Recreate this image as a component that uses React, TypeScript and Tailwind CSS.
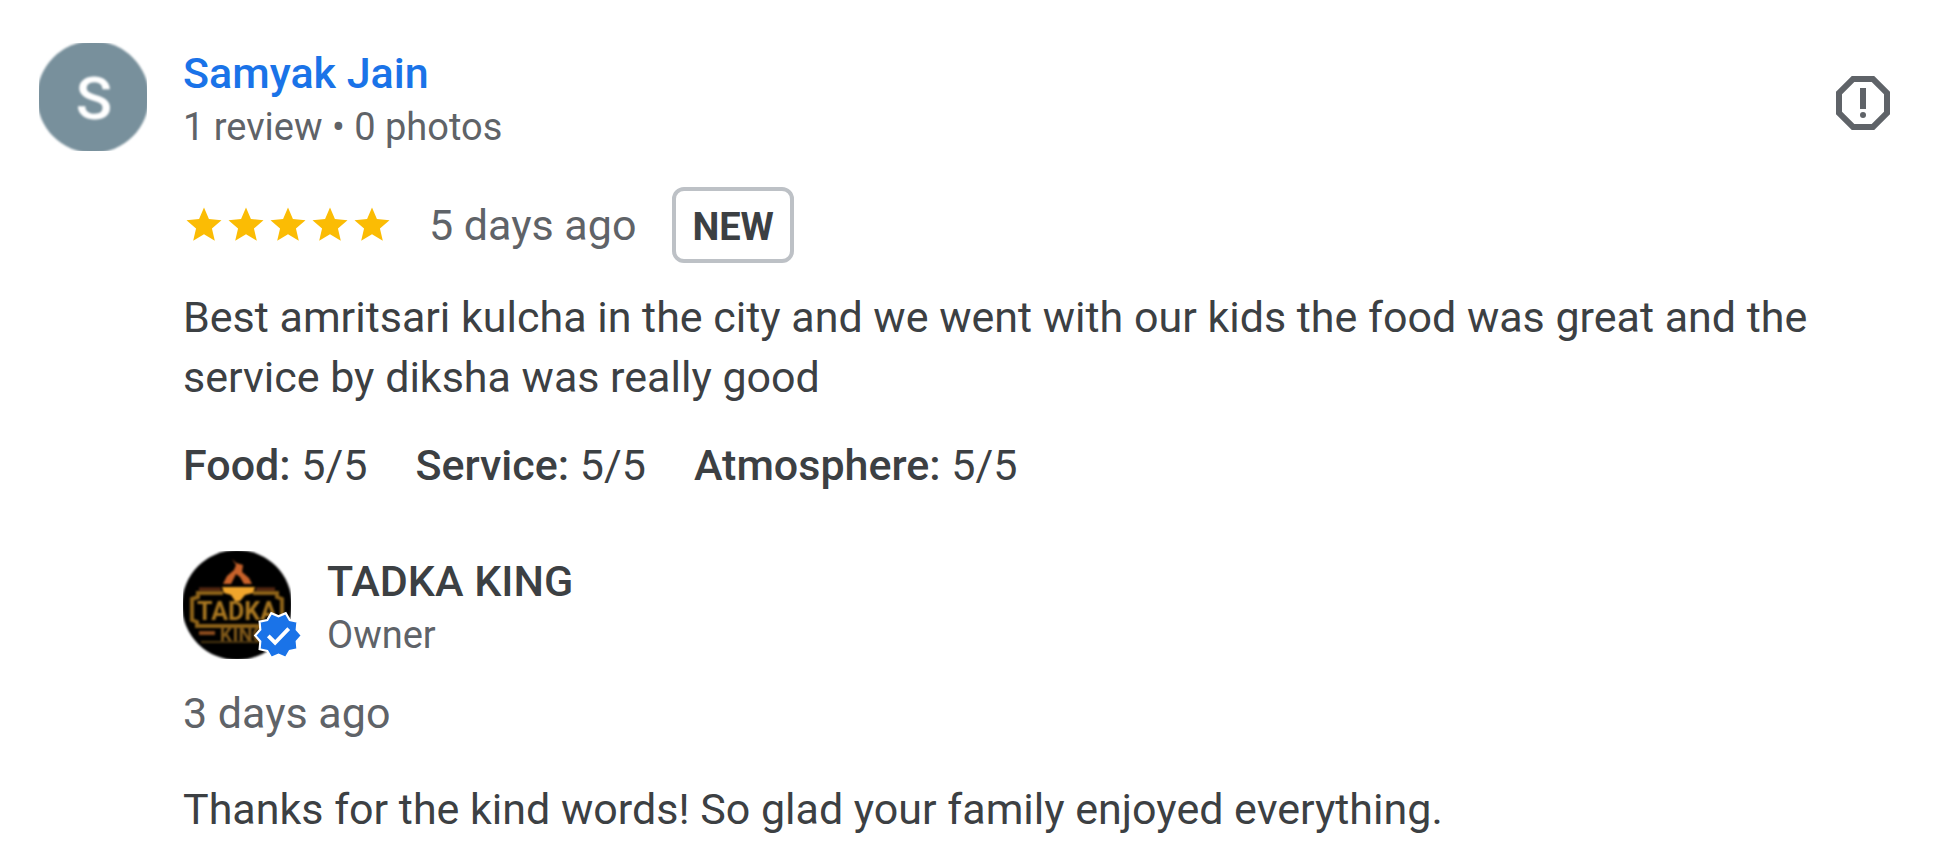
interface Rating {
  label: string;
  score: number;
}

const ratings: Rating[] = [
  { label: "Food", score: 5 },
  { label: "Service", score: 5 },
  { label: "Atmosphere", score: 5 },
];

function Star() {
  return (
    <svg viewBox="0 0 24 24" className="w-[42px] h-[42px]" fill="#fbbc04" aria-hidden="true">
      <path d="M12 17.27L18.18 21l-1.64-7.03L22 9.24l-7.19-.61L12 2 9.19 8.63 2 9.24l5.46 4.73L5.82 21z" />
    </svg>
  );
}

function ReportIcon() {
  return (
    <svg viewBox="0 0 24 24" className="w-18 h-18" fill="currentColor" aria-hidden="true">
      <path d="M15.73 3H8.27L3 8.27v7.46L8.27 21h7.46L21 15.73V8.27L15.73 3zM19 14.9L14.9 19H9.1L5 14.9V9.1L9.1 5h5.8L19 9.1v5.8z" />
      <circle cx="12" cy="16" r="1" />
      <path d="M11 7h2v7h-2z" />
    </svg>
  );
}

function ReviewerAvatar() {
  return (
    <svg viewBox="0 0 108 108" className="w-27 h-27 shrink-0" aria-hidden="true">
      <g className="blur-[1px]">
        <circle cx="54" cy="54" r="56" fill="#78909c" />
        <text
          x="55"
          y="76"
          textAnchor="middle"
          fill="#ffffff"
          className="font-[Roboto,sans-serif] text-[60px] font-medium"
        >
          S
        </text>
      </g>
    </svg>
  );
}

function OwnerLogo() {
  return (
    <svg viewBox="0 0 108 108" className="w-27 h-27" aria-hidden="true">
      <g className="blur-[1px]">
        <circle cx="54" cy="54" r="55" fill="#000000" />
        {/* flame */}
        <path
          d="M49 8L53 12L60 14L59 21L66 27L69 33H61L57 26L53 23L48 33H40L44 25L51 19L53 14Z"
          fill="#c9622a"
        />
        {/* bowl */}
        <path d="M39 36H72L70 42L62 44L57 50H52L48 44L41 42Z" fill="#f0a52c" />
        {/* sign frame */}
        <path d="M16 38H38M73 38H92" stroke="#5c2a12" strokeWidth="3" />
        <path
          d="M40 42H15V46L9 48V69L14 71V75H94V71L99 69V48L94 46V42H70"
          fill="none"
          stroke="#8c6118"
          strokeWidth="4"
        />
        <text
          x="54"
          y="69"
          textAnchor="middle"
          fill="#a87620"
          className="font-[Roboto,sans-serif] text-[25px] font-bold"
        >
          TADKA
        </text>
        <path d="M16 82H32" stroke="#8a4a1c" strokeWidth="4" />
        <text
          x="60"
          y="91"
          textAnchor="middle"
          fill="#80591a"
          className="font-[Roboto,sans-serif] text-[20px] font-bold"
        >
          KING
        </text>
        <path d="M18 91H88" stroke="#4a3510" strokeWidth="2" />
      </g>
    </svg>
  );
}

function VerifiedBadge() {
  return (
    <svg viewBox="0 0 24 24" className="absolute left-[70px] top-[59px] w-[51px] h-[51px]" aria-hidden="true">
      <path
        d="M23 12l-2.44-2.79.34-3.69-3.61-.82-1.89-3.2L12 2.96 8.6 1.5 6.71 4.69 3.1 5.5l.34 3.7L1 12l2.44 2.79-.34 3.7 3.61.82L8.6 22.5l3.4-1.47 3.4 1.46 1.89-3.19 3.61-.82-.34-3.69L23 12z"
        fill="#1a73e8"
        stroke="#ffffff"
        strokeWidth="1"
      />
      <path d="M7.2 12.2l3.2 3.2 6.4-6.6" fill="none" stroke="#ffffff" strokeWidth="1.8" />
    </svg>
  );
}

export default function App() {
  return (
    <article className="bg-white pl-[39px] pr-[34px] pt-[43px] pb-[26px] font-[Roboto,sans-serif] text-[43px] leading-[60px] text-[#3c4043]">
      <header className="flex items-center gap-9">
        <ReviewerAvatar />
        <div className="flex-1">
          <a href="#reviewer" className="block font-medium text-[#1a73e8]">
            Samyak Jain
          </a>
          <p className="text-[38px] leading-[48px] text-[#5f6368]">1 review • 0 photos</p>
        </div>
        <button type="button" aria-label="Report review" className="pt-3 text-[#5f6368]">
          <ReportIcon />
        </button>
      </header>

      <div className="pl-36 pt-9">
        <div className="flex items-center gap-9">
          <div className="flex" role="img" aria-label="5 stars">
            {[1, 2, 3, 4, 5].map((n) => (
              <Star key={n} />
            ))}
          </div>
          <span className="text-[#5f6368]">5 days ago</span>
          <span className="rounded-xl border-4 border-[#bdc1c6] px-4 pt-1.5 pb-0.5 text-[38px] font-bold">
            NEW
          </span>
        </div>

        <p className="mt-6 pr-12">
          Best amritsari kulcha in the city and we went with our kids the food was great and the service by diksha
          was really good
        </p>

        <div className="mt-7 flex gap-12">
          {ratings.map((r) => (
            <span key={r.label}>
              <b className="font-medium">{r.label}:</b> {r.score}/5
            </span>
          ))}
        </div>

        <div className="mt-14 flex gap-9">
          <div className="relative shrink-0">
            <OwnerLogo />
            <VerifiedBadge />
          </div>
          <div>
            <h3 className="font-medium">TADKA KING</h3>
            <p className="text-[38px] leading-[48px] text-[#5f6368]">Owner</p>
          </div>
        </div>

        <p className="mt-6 text-[#5f6368]">3 days ago</p>
        <p className="mt-9">Thanks for the kind words! So glad your family enjoyed everything.</p>
      </div>
    </article>
  );
}
